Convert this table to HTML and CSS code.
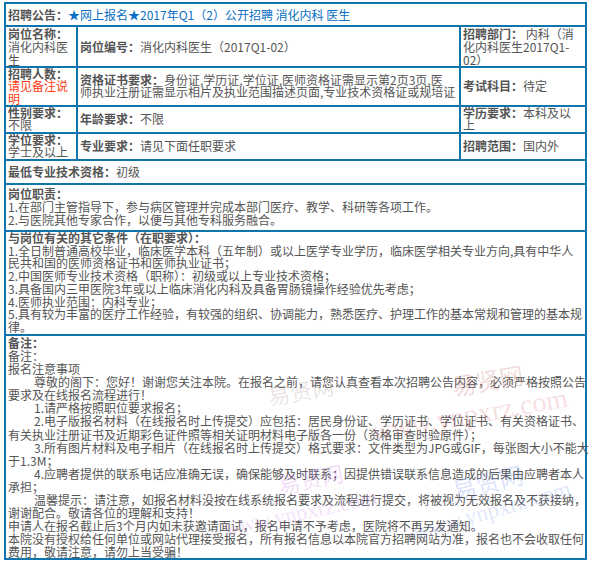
FILE: index.html
```html
<!DOCTYPE html>
<html lang="zh-CN">
<head>
<meta charset="utf-8">
<title>招聘公告</title>
<link rel="stylesheet" href="styles.css">
</head>
<body>
<div class="page">
  <table class="job">
    <colgroup>
      <col class="c1">
      <col class="c2">
      <col class="c3">
    </colgroup>
    <tr class="r-head">
      <td colspan="3"><b>招聘公告：</b><a class="title" href="#">★网上报名★2017年Q1（2）公开招聘 消化内科 医生</a></td>
    </tr>
    <tr class="r-name">
      <td class="top"><b>岗位名称：</b><br>消化内科医<br>生</td>
      <td><b>岗位编号：</b>消化内科医生（2017Q1-02）</td>
      <td class="top"><b>招聘部门：</b>&nbsp;内科（消<br>化内科医生2017Q1-<br>02）</td>
    </tr>
    <tr class="r-num">
      <td class="top"><b>招聘人数：</b><br><span class="red">请见备注说<br>明</span></td>
      <td><b>资格证书要求：</b>身份证,学历证,学位证,医师资格证需显示第2页3页,医<br>师执业注册证需显示相片及执业范围描述页面,专业技术资格证或规培证</td>
      <td><b>考试科目：</b>待定</td>
    </tr>
    <tr class="r-two">
      <td class="top"><b>性别要求：</b><br>不限</td>
      <td><b>年龄要求：</b>不限</td>
      <td class="top"><b>学历要求：</b>本科及以<br>上</td>
    </tr>
    <tr class="r-two">
      <td class="top"><b>学位要求：</b><br>学士及以上</td>
      <td><b>专业要求：</b>请见下面任职要求</td>
      <td><b>招聘范围：</b>国内外</td>
    </tr>
    <tr class="r-one">
      <td colspan="3"><b>最低专业技术资格：</b>初级</td>
    </tr>
    <tr class="r-duty">
      <td colspan="3" class="top"><b>岗位职责：</b><br>1.在部门主管指导下，参与病区管理并完成本部门医疗、教学、科研等各项工作。<br>2.与医院其他专家合作，以便与其他专科服务融合。</td>
    </tr>
    <tr class="r-cond">
      <td colspan="3" class="top"><b>与岗位有关的其它条件（在职要求）：</b><br>1.全日制普通高校毕业，临床医学本科（五年制）或以上医学专业学历，临床医学相关专业方向,具有中华人<br>民共和国的医师资格证书和医师执业证书；<br>2.中国医师专业技术资格（职称）：初级或以上专业技术资格；<br>3.具备国内三甲医院3年或以上临床消化内科及具备胃肠镜操作经验优先考虑；<br>4.医师执业范围：内科专业；<br>5.具有较为丰富的医疗工作经验，有较强的组织、协调能力，熟悉医疗、护理工作的基本常规和管理的基本规<br>律。</td>
    </tr>
    <tr class="r-note">
      <td colspan="3" class="top"><b>备注：</b><br>备注：<br>报名注意事项<br><span class="ind">尊敬的阁下：您好！谢谢您关注本院。在报名之前，请您认真查看本次招聘公告内容，必须严格按照公告</span><br>要求及在线报名流程进行！<br><span class="ind">1.请严格按照职位要求报名；</span><br><span class="ind">2.电子版报名材料（在线报名时上传提交）应包括：居民身份证、学历证书、学位证书、有关资格证书、</span><br>有关执业注册证书及近期彩色证件照等相关证明材料电子版各一份（资格审查时验原件）；<br><span class="ind">3.所有图片材料及电子相片（在线报名时上传提交）格式要求：文件类型为JPG或GIF，每张图大小不能大</span><br>于1.3M；<br><span class="ind">4.应聘者提供的联系电话应准确无误，确保能够及时联系；因提供错误联系信息造成的后果由应聘者本人</span><br>承担；<br><span class="ind">温馨提示：请注意，如报名材料没按在线系统报名要求及流程进行提交，将被视为无效报名及不获接纳，</span><br>谢谢配合。敬请各位的理解和支持！<br>申请人在报名截止后3个月内如未获邀请面试，报名申请不予考虑，医院将不再另发通知。<br>本院没有授权给任何单位或网站代理接受报名，所有报名信息以本院官方招聘网站为准，报名也不会收取任何<br>费用，敬请注意，请勿上当受骗！</td>
    </tr>
  </table>
  <span class="wm wm-a">易贤网</span>
  <span class="wm wm-b">易贤网</span>
  <span class="wm wm-c">www.ynpxrz.com</span>
  <span class="wm wm-d">易贤网</span>
  <span class="wm wm-e">www.ynpxrz.com</span>
  <span class="wm wm-f">易贤网</span>
  <span class="wm wm-g">www.ynpxrz.com</span>
</div>
</body>
</html>
```

FILE: styles.css
```css
html, body {
  margin: 0;
  padding: 0;
  background: #ffffff;
}

.page {
  position: relative;
  padding: 2px 0 0 4px;
  width: 589px;
  font-family: "Noto Sans CJK SC", "Noto Sans", sans-serif;
  font-size: 12px;
  line-height: 13px;
  color: #555555;
  overflow: hidden;
}

.job {
  width: 583px;
  table-layout: fixed;
  border-collapse: separate;
  border-spacing: 0;
  border-top: 2px solid #0f76ad;
  border-left: 2px solid #0f76ad;
}

.c1 { width: 72px; }
.c2 { width: 383px; }
.c3 { width: 126px; }

.job td {
  border-right: 2px solid #0f76ad;
  border-bottom: 2px solid #0f76ad;
  padding: 0 1px 0 2px;
  white-space: nowrap;
  vertical-align: middle;
}

.job td.top {
  vertical-align: top;
}

.job b {
  font-weight: 700;
  color: #555555;
}

.r-head td { padding-top: 4px; padding-bottom: 4px; }
.r-num td { line-height: 12.3px; }
.r-two td { line-height: 12.5px; }
.r-one td { padding-top: 4px; padding-bottom: 5px; }
.r-duty td { padding-top: 2px; padding-bottom: 4px; }
.r-cond td { line-height: 12.75px; }
.r-note td { line-height: 13.1px; }

.title {
  color: #0a6fc4;
  text-decoration: none;
}

.red {
  color: #ff3a12;
}

.ind {
  padding-left: 26px;
}

.wm {
  position: absolute;
  white-space: nowrap;
  pointer-events: none;
  font-family: "Liberation Serif", "Noto Sans CJK SC", serif;
}

.wm-a { left: 268px; top: 386px; font-size: 22px; color: rgba(160, 130, 130, 0.22); transform: rotate(-10deg); }
.wm-b { left: 452px; top: 376px; font-size: 24px; color: rgba(200, 110, 110, 0.25); transform: rotate(-10deg); }
.wm-c { left: 370px; top: 408px; font-size: 28px; color: rgba(210, 90, 100, 0.2); transform: rotate(-10deg); }
.wm-d { left: 278px; top: 474px; font-size: 22px; color: rgba(200, 100, 230, 0.22); transform: rotate(-12deg); }
.wm-e { left: 222px; top: 506px; font-size: 22px; color: rgba(200, 100, 230, 0.2); transform: rotate(-12deg); }
.wm-f { left: 452px; top: 478px; font-size: 24px; color: rgba(90, 130, 230, 0.22); transform: rotate(-14deg); }
.wm-g { left: 410px; top: 504px; font-size: 23px; color: rgba(90, 130, 230, 0.2); transform: rotate(-16deg); }
```
